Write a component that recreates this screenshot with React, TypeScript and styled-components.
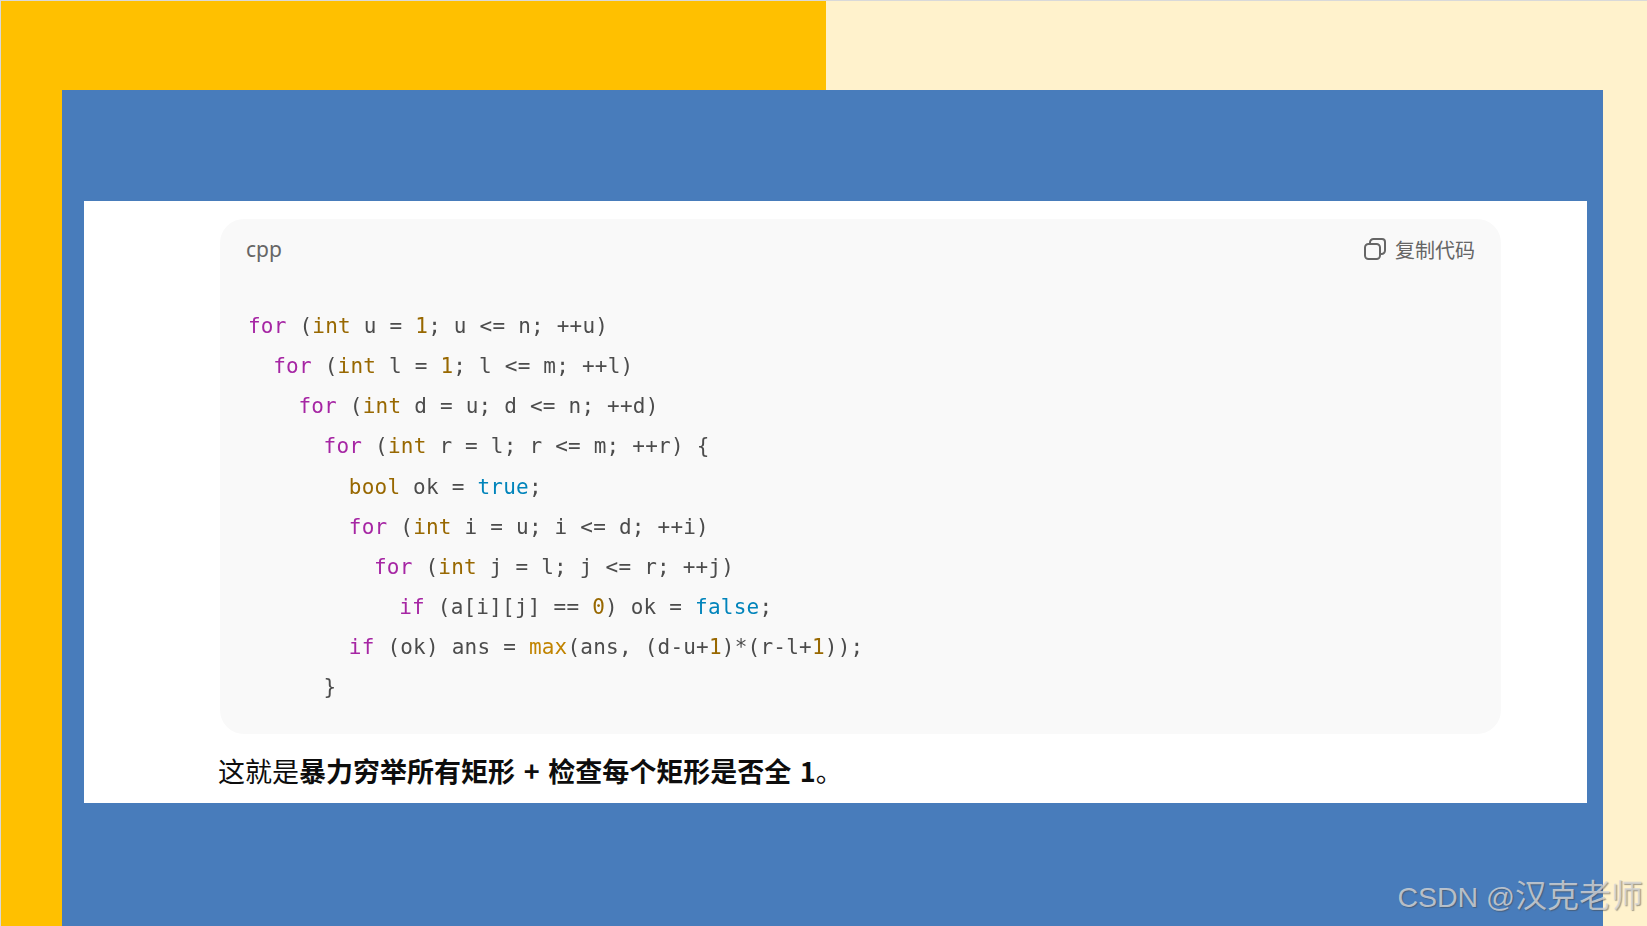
import React from "react";
import styled, { createGlobalStyle } from "styled-components";

const Global = createGlobalStyle`
  html, body { margin: 0; padding: 0; background: #d9d9d9; }
  #root { width: 1647px; height: 926px; overflow: hidden; }
`;

const Slide = styled.div`
  position: relative;
  box-sizing: border-box;
  width: 1647px;
  height: 926px;
  padding: 1px 0 0 1px;
  overflow: hidden;
`;

const Stage = styled.div`
  display: grid;
  grid-template-columns: 61px 764px 1fr;
  grid-template-rows: 89px 1fr;
  height: 100%;
  background: #fff2cc;
`;

const YellowTop = styled.div`
  grid-column: 1 / 3;
  grid-row: 1;
  background: #ffc000;
`;

const YellowSide = styled.div`
  grid-column: 1;
  grid-row: 2;
  background: #ffc000;
`;

const CreamTop = styled.div`
  grid-column: 3;
  grid-row: 1;
  background: #fff2cc;
`;

const BlueWrap = styled.div`
  grid-column: 2 / 4;
  grid-row: 2;
  margin-right: 44px;
  padding: 111px 16px 0 22px;
  background: #487cbb;
`;

const WhitePanel = styled.div`
  box-sizing: border-box;
  height: 602px;
  padding: 18px 86px 0 136px;
  background: #fff;
`;

const CodeCard = styled.div`
  box-sizing: border-box;
  height: 515px;
  border-radius: 24px;
  background: #f9f9f9;
  padding: 0 26px 0 26px;
`;

const CardHeader = styled.div`
  display: flex;
  justify-content: space-between;
  align-items: center;
  height: 60px;
`;

const Lang = styled.span`
  font-family: "Noto Sans", "Liberation Sans", sans-serif;
  font-size: 21px;
  color: #666;
`;

const CopyButton = styled.div`
  display: flex;
  align-items: center;
  gap: 8px;
  font-family: "Noto Sans CJK SC", sans-serif;
  font-size: 20px;
  color: #666;
`;

const Code = styled.div`
  margin: 27px 0 0;
  padding-left: 2px;
  font-family: "DejaVu Sans Mono", "Liberation Mono", monospace;
  font-size: 21px;
  letter-spacing: 0.22px;
  line-height: 40.15px;
  color: #4c4c4c;
  white-space: pre;
  filter: blur(0.3px);
`;

const Line = styled.div<{ $indent?: number }>`
  padding-left: ${(p) => (p.$indent ?? 0) * 12.6}px;
`;

const Keyword = styled.span`
  color: #a626a4;
`;
const TypeName = styled.span`
  color: #986801;
`;
const Num = styled.span`
  color: #986801;
`;
const Literal = styled.span`
  color: #0184bb;
`;
const FnName = styled.span`
  color: #c18401;
`;

const Summary = styled.p`
  margin: 19px 0 0 -2px;
  font-family: "Noto Sans CJK SC", "Liberation Sans", sans-serif;
  font-size: 27px;
  line-height: 36px;
  word-spacing: 2.5px;
  color: #0d0d0d;
  strong {
    font-weight: 700;
  }
`;

const Watermark = styled.div`
  position: absolute;
  right: 4px;
  bottom: 10px;
  font-family: "Liberation Sans", "Noto Sans CJK SC", sans-serif;
  font-size: 28.5px;
  line-height: 38px;
  color: rgba(215, 215, 215, 0.78);
  text-shadow: 1px 1px 1px rgba(70, 70, 70, 0.5);
  white-space: nowrap;
`;

const WatermarkName = styled.span`
  font-size: 32px;
`;

const CopyIcon = () => (
  <svg width="24" height="24" viewBox="0 0 24 24" fill="none" stroke="#666" strokeWidth="2">
    <rect x="2" y="7" width="15" height="15" rx="3.5" />
    <path d="M7 7V5.5A3.5 3.5 0 0 1 10.5 2H19a3 3 0 0 1 3 3v8.5A3.5 3.5 0 0 1 18.5 17H17" />
  </svg>
);

export default function App() {
  const K = Keyword, T = TypeName, N = Num, L = Literal, F = FnName;
  return (
    <>
      <Global />
      <Slide>
        <Stage>
          <YellowTop />
          <CreamTop />
          <YellowSide />
          <BlueWrap>
            <WhitePanel>
              <CodeCard>
                <CardHeader>
                  <Lang>cpp</Lang>
                  <CopyButton>
                    <CopyIcon />
                    复制代码
                  </CopyButton>
                </CardHeader>
                <Code>
                  <Line><K>for</K> (<T>int</T> u = <N>1</N>; u &lt;= n; ++u)</Line>
                  <Line $indent={2}><K>for</K> (<T>int</T> l = <N>1</N>; l &lt;= m; ++l)</Line>
                  <Line $indent={4}><K>for</K> (<T>int</T> d = u; d &lt;= n; ++d)</Line>
                  <Line $indent={6}><K>for</K> (<T>int</T> r = l; r &lt;= m; ++r) {"{"}</Line>
                  <Line $indent={8}><T>bool</T> ok = <L>true</L>;</Line>
                  <Line $indent={8}><K>for</K> (<T>int</T> i = u; i &lt;= d; ++i)</Line>
                  <Line $indent={10}><K>for</K> (<T>int</T> j = l; j &lt;= r; ++j)</Line>
                  <Line $indent={12}><K>if</K> (a[i][j] == <N>0</N>) ok = <L>false</L>;</Line>
                  <Line $indent={8}><K>if</K> (ok) ans = <F>max</F>(ans, (d-u+<N>1</N>)*(r-l+<N>1</N>));</Line>
                  <Line $indent={6}>{"}"}</Line>
                </Code>
              </CodeCard>
              <Summary>
                这就是<strong>暴力穷举所有矩形 + 检查每个矩形是否全 1</strong>。
              </Summary>
            </WhitePanel>
          </BlueWrap>
        </Stage>
        <Watermark>CSDN @<WatermarkName>汉克老师</WatermarkName></Watermark>
      </Slide>
    </>
  );
}
